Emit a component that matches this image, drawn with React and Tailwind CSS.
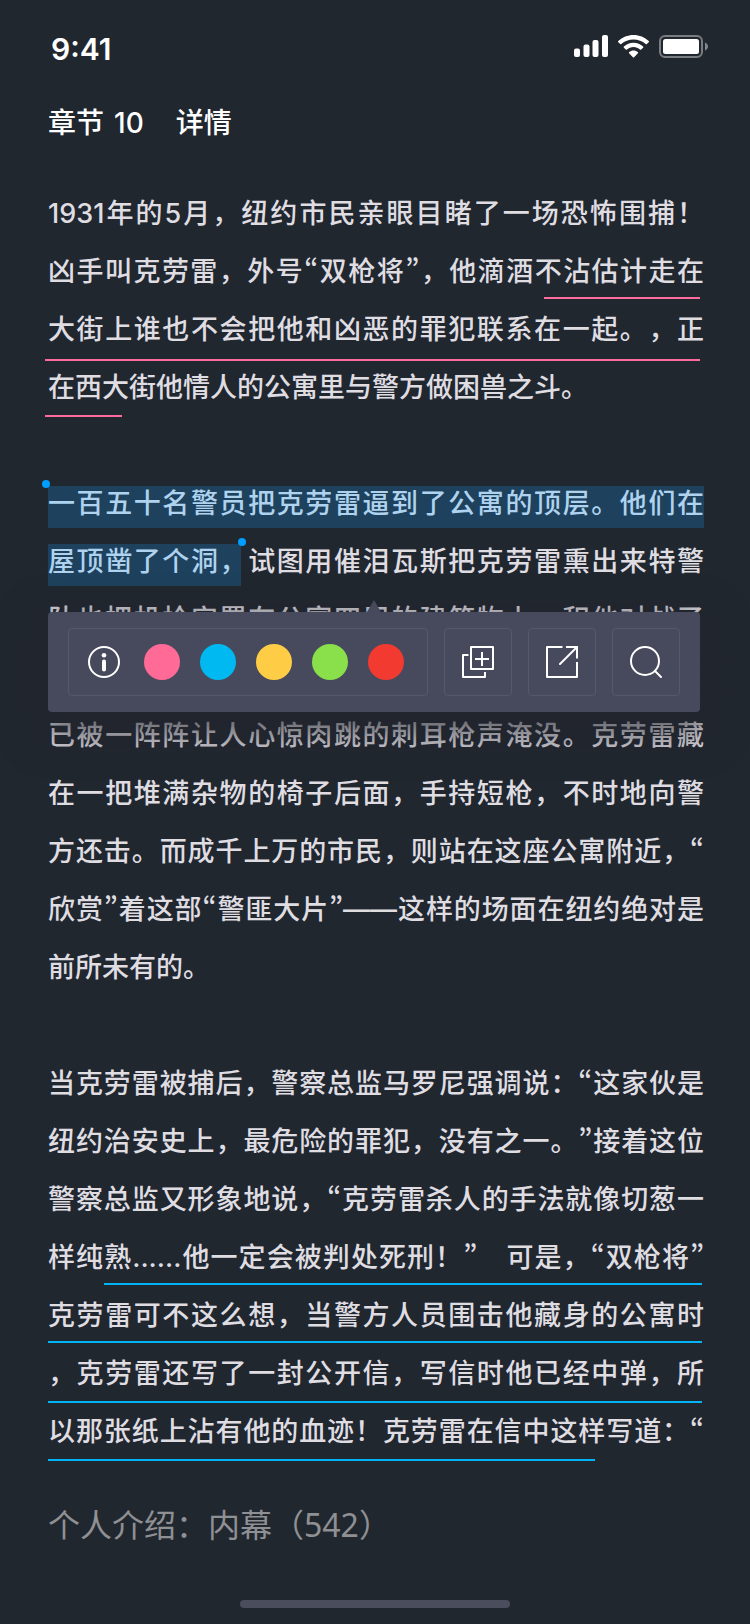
import { useState } from 'react';

// Each entry is one printed line. `fit` lines are spread over the whole measure.
const PARAGRAPHS = [
    [
        { text: '1931年的5月，纽约市民亲眼目睹了一场恐怖围捕！', fit: true },
        { text: '凶手叫克劳雷，外号“双枪将”，他滴酒不沾估计走在', fit: true, mark: 'bg-[#ff6b9d] top-[54px] left-[496px] right-1' },
        { text: '大街上谁也不会把他和凶恶的罪犯联系在一起。，正', fit: true, mark: 'bg-[#ff6b9d] top-[58px] -left-[3px] right-1' },
        { text: '在西大街他情人的公寓里与警方做困兽之斗。', mark: 'bg-[#ff6b9d] top-[56px] -left-[3px] w-[77px]' },
    ],
    [
        { selected: '一百五十名警员把克劳雷逼到了公寓的顶层。他们在', fit: true, handle: 'start' },
        { selected: '屋顶凿了个洞，', text: '试图用催泪瓦斯把克劳雷熏出来特警', fit: true, handle: 'end' },
        { text: '队也把机枪安置在公寓四周的建筑物上，积他对战了', fit: true },
        { text: '' },
        { text: '已被一阵阵让人心惊肉跳的刺耳枪声淹没。克劳雷藏', fit: true },
        { text: '在一把堆满杂物的椅子后面，手持短枪，不时地向警', fit: true },
        { text: '方还击。而成千上万的市民，则站在这座公寓附近，“', fit: true },
        { text: '欣赏”着这部“警匪大片”——这样的场面在纽约绝对是', fit: true },
        { text: '前所未有的。' },
    ],
    [
        { text: '当克劳雷被捕后，警察总监马罗尼强调说：“这家伙是', fit: true },
        { text: '纽约治安史上，最危险的罪犯，没有之一。”接着这位', fit: true },
        { text: '警察总监又形象地说，“克劳雷杀人的手法就像切葱一', fit: true },
        { text: '样纯熟......他一定会被判处死刑！”　可是，“双枪将”', fit: true, mark: 'bg-[#00b4f5] top-[54px] left-14 right-0.5' },
        { text: '克劳雷可不这么想，当警方人员围击他藏身的公寓时', fit: true, mark: 'bg-[#00b4f5] top-[54px] left-0 right-0.5' },
        { text: '，克劳雷还写了一封公开信，写信时他已经中弹，所', fit: true, mark: 'bg-[#00b4f5] top-[56px] left-0 right-0.5' },
        { text: '以那张纸上沾有他的血迹！克劳雷在信中这样写道：“', fit: true, mark: 'bg-[#00b4f5] top-[56px] left-0 w-[547px]' },
    ],
];

const COLORS = [
    { name: '粉色', className: 'bg-[#ff6b96]' },
    { name: '蓝色', className: 'bg-[#00b9f1]' },
    { name: '黄色', className: 'bg-[#ffcd45]' },
    { name: '绿色', className: 'bg-[#8ae04a]' },
    { name: '红色', className: 'bg-[#f23a30]' },
];

const StatusBar = () => (
    <div className="flex justify-between items-center h-[92px] pl-[51px] pr-[42px] text-white">
        <span className="text-3xl leading-9 font-semibold pt-1.5">9:41</span>
        <div className="flex items-center gap-2.5">
            <svg width="34" height="22" viewBox="0 0 34 22" fill="currentColor">
                <rect x="0" y="13.5" width="6" height="8.5" rx="2" />
                <rect x="9.5" y="9.5" width="6" height="12.5" rx="2" />
                <rect x="18.5" y="5" width="6" height="17" rx="2" />
                <rect x="28" y="0" width="6" height="22" rx="2" />
            </svg>
            <svg width="31" height="23" viewBox="0 0 31 23" fill="currentColor">
                <path d="M15.500 0C9.700 0 4.300 2.300.300 6c-.4.400-.4.900 0 1.300l1.800 1.800c.3.300.8.300 1.200 0C6.600 6.100 10.900 4.500 15.500 4.500s8.900 1.600 12.200 4.600c.4.300.9.300 1.200 0l1.800-1.800c.4-.4.400-.9 0-1.300C26.700 2.300 21.300 0 15.500 0z" />
                <path d="M15.500 7.800c-3.700 0-7 1.400-9.600 3.700-.4.300-.4.900 0 1.300l1.900 1.800c.3.300.8.300 1.200 0 1.700-1.500 4-2.500 6.500-2.500s4.800 1 6.500 2.500c.4.300.9.300 1.200 0l1.900-1.800c.4-.4.400-1 0-1.300-2.600-2.300-5.900-3.700-9.600-3.700z" />
                <path d="M15.500 15.500c-1.700 0-3.200.600-4.300 1.500-.4.400-.4.900-.1 1.300l3.800 3.900c.3.300.9.300 1.200 0l3.800-3.900c.3-.4.300-.9-.1-1.300-1.100-.9-2.600-1.500-4.300-1.500z" />
            </svg>
            <svg width="49" height="23" viewBox="0 0 49 23" fill="currentColor">
                <rect x="1" y="1" width="42" height="21" rx="5" fill="none" stroke="currentColor" strokeWidth="2" opacity=".4" />
                <rect x="4" y="4" width="36" height="15" rx="2.500" />
                <path d="M46 7.500c1.700.7 3 2.200 3 4s-1.300 3.300-3 4z" opacity=".45" />
            </svg>
        </div>
    </div>
);

// Curly quotes take the proportional Korean forms, the Chinese ones are full width
const withQuotes = (text = '') =>
    text.split(/([“”])/).map((part, i) =>
        part === '“' || part === '”' ? (
            <span key={i} lang="ko" className="leading-none font-['Noto_Sans_CJK_KR',sans-serif]">{part}</span>
        ) : (
            part
        )
    );

const Line = ({ line }) => (
    <span className={`relative block h-[58px] leading-[58px] whitespace-nowrap ${line.fit ? '[text-align-last:justify]' : ''}`}>
        {line.selected && (
            <mark className="relative isolate bg-transparent text-[#afd3ef]">
                <i className={`absolute -z-10 -top-px left-0 h-[42px] bg-[#1e425d] ${line.handle === 'end' ? 'right-[7px]' : 'right-0'}`} />
                {line.selected}
                <i className={`absolute -top-[7px] size-2 rounded-full bg-[#009dff] ${line.handle === 'end' ? 'right-0.5' : '-left-1.5'}`} />
            </mark>
        )}
        {withQuotes(line.text)}
        {line.mark && <i className={`absolute h-0.5 ${line.mark}`} />}
    </span>
);

const ToolButton = ({ label, children }) => (
    <button type="button" aria-label={label} className="flex items-center justify-center size-[68px] rounded border border-[#55576a]">
        {children}
    </button>
);

const SelectionMenu = () => {
    const [color, setColor] = useState('');

    return (
        <div className="absolute left-0 right-1 top-[137px] flex justify-between rounded bg-[#47495c] px-5 py-4 text-white shadow-[0_14px_40px_6px_rgba(35,36,46,0.85)]">
            <svg className="absolute left-1/2 -top-3 -translate-x-1/2 text-[#47495c]" width="14" height="12" viewBox="0 0 14 12" fill="currentColor">
                <path d="M7 0l7 12H0z" />
            </svg>
            <div className="flex items-center h-[68px] rounded border border-[#55576a] pl-[19px] pr-[23px]">
                <button type="button" aria-label="信息" className="mr-6">
                    <svg width="32" height="32" viewBox="0 0 32 32" fill="none">
                        <circle cx="16" cy="16" r="15" stroke="currentColor" strokeWidth="2" />
                        <circle cx="16" cy="9.300" r="2.300" fill="currentColor" />
                        <rect x="14" y="13.500" width="4" height="12" rx="2" fill="currentColor" />
                    </svg>
                </button>
                <div className="flex gap-5">
                    {COLORS.map((c) => (
                        <input
                            key={c.name}
                            type="radio"
                            name="color"
                            aria-label={c.name}
                            checked={color === c.name}
                            onChange={() => setColor(c.name)}
                            className={`appearance-none size-9 rounded-full ${c.className}`}
                        />
                    ))}
                </div>
            </div>
            <ToolButton label="复制">
                <svg width="32" height="32" viewBox="0 0 32 32" fill="none" stroke="currentColor" strokeWidth="2" strokeLinejoin="round">
                    <rect x="9" y="1" width="22" height="22" />
                    <path d="M20 6v14M13 13h14" />
                    <path d="M6.500 9H1v22h22v-5" />
                </svg>
            </ToolButton>
            <ToolButton label="分享">
                <svg width="32" height="32" viewBox="0 0 32 32" fill="none" stroke="currentColor" strokeWidth="2" strokeLinejoin="round">
                    <path d="M16.500 1H1v30h30V16" />
                    <path d="M20 1h11v11.500" />
                    <path d="M31 1L14 18" strokeLinecap="round" />
                </svg>
            </ToolButton>
            <ToolButton label="搜索">
                <svg width="32" height="32" viewBox="0 0 32 32" fill="none" stroke="currentColor" strokeWidth="2" strokeLinecap="round">
                    <circle cx="15" cy="15" r="14" />
                    <path d="M25 25l6 6" />
                </svg>
            </ToolButton>
        </div>
    );
};

const App = () => {
    return (
        <div className="flex flex-col min-h-screen bg-[#21272f] font-[Inter,'Noto_Sans_CJK_SC',sans-serif] [text-spacing-trim:space-all]" lang="zh-CN">
            <StatusBar />
            <header className="pl-12 pt-[11px]">
                <h1 className="flex gap-8 text-[28px] leading-10 font-medium text-white">
                    <span className="flex gap-2.5">
                        <span>章节</span>
                        <span>10</span>
                    </span>
                    <span>详情</span>
                </h1>
            </header>
            <main className="pl-12 pr-[46px] pt-[42px]">
                <article className="flex flex-col gap-[58px] text-[27px] font-medium text-[#dfdde2]">
                    {PARAGRAPHS.map((lines, i) => (
                        <div key={i} className="relative">
                            <p>
                                {lines.map((line, j) => (
                                    <Line key={j} line={line} />
                                ))}
                            </p>
                            {lines.some((line) => line.handle === 'end') && <SelectionMenu />}
                        </div>
                    ))}
                </article>
            </main>
            <footer className="flex flex-col grow justify-between pl-12 pr-12 pt-10 pb-4">
                <p className="text-[32px] leading-[48px] text-[#8f9094] font-['Noto_Sans','Noto_Sans_CJK_SC',sans-serif]">个人介绍：内幕（542）</p>
                <div className="self-center w-[270px] h-2 rounded-full bg-[#4a4d5b]" />
            </footer>
        </div>
    );
};

export default App;
